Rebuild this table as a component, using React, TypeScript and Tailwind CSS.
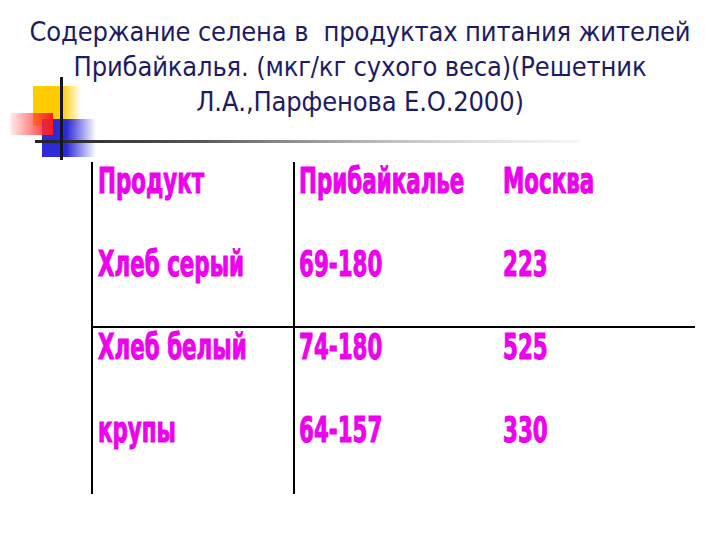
import React from "react";

const rows = [
  ["Продукт", "Прибайкалье", "Москва"],
  ["Хлеб серый", "69-180", "223"],
  ["Хлеб белый", "74-180", "525"],
  ["крупы", "64-157", "330"],
];

function Corner() {
  return (
    <svg className="absolute left-0 top-[70px]" width="600" height="100" viewBox="0 0 600 100">
      <defs>
        <linearGradient id="yel" x1="0" x2="1" y1="0" y2="0">
          <stop offset="0" stopColor="#ffcc00" />
          <stop offset="0.6" stopColor="#ffcc00" />
          <stop offset="1" stopColor="#ffcc00" stopOpacity="0" />
        </linearGradient>
        <linearGradient id="red" x1="0" x2="1" y1="0" y2="0">
          <stop offset="0" stopColor="#ff4444" stopOpacity="0.1" />
          <stop offset="0.7" stopColor="#ff3030" stopOpacity="0.8" />
          <stop offset="1" stopColor="#ff1a1a" />
        </linearGradient>
        <linearGradient id="blu" x1="0" x2="1" y1="0" y2="0">
          <stop offset="0" stopColor="#2b2bd8" />
          <stop offset="0.45" stopColor="#2b2bd8" />
          <stop offset="1" stopColor="#2b2bd8" stopOpacity="0" />
        </linearGradient>
        <linearGradient id="hl" x1="0" x2="1" y1="0" y2="0">
          <stop offset="0" stopColor="#222222" />
          <stop offset="0.3" stopColor="#555555" />
          <stop offset="1" stopColor="#e0e0e0" stopOpacity="0.3" />
        </linearGradient>
      </defs>
      <rect x="33" y="16" width="48" height="40" fill="url(#yel)" />
      <rect x="42" y="49" width="54" height="38" fill="url(#blu)" />
      <rect x="10" y="43" width="43" height="22" fill="url(#red)" />
      <rect x="35" y="70" width="545" height="3" fill="url(#hl)" />
      <rect x="60" y="7" width="3" height="83" fill="#15152a" />
    </svg>
  );
}

function Cell({ text, className }: { text: string; className: string }) {
  return (
    <div className={className}>
      <span className="inline-block origin-left scale-x-[0.68] whitespace-nowrap [-webkit-text-stroke:1px_#e600e6]">
        {text}
      </span>
    </div>
  );
}

export default function App() {
  return (
    <div className="relative w-[720px] h-[540px] bg-white overflow-hidden">
      <Corner />
      <h1
        className="relative pt-[14px] text-center text-[27px] leading-[35px] tracking-[-0.15px] text-[#1e1b66] font-normal"
        style={{ fontFamily: "'DejaVu Sans Condensed', 'Noto Sans', sans-serif" }}
      >
        Содержание селена в&nbsp; продуктах питания жителей
        <br />
        Прибайкалья. (мкг/кг сухого веса)(Решетник
        <br />
        Л.А.,Парфенова Е.О.2000)
      </h1>

      <div
        className="relative mt-[43px] ml-[91px] w-[604px] text-[#f000f0] font-bold text-[35px] leading-[36px]"
        style={{ fontFamily: "'DejaVu Sans Condensed', sans-serif" }}
      >
        {rows.map((r, i) => (
          <div
            key={i}
            className={`grid grid-cols-[202px_204px_198px] h-[83px] ${i === 1 ? "border-b-2 border-black" : ""}`}
          >
            <Cell text={r[0]} className="border-l-2 border-black pl-[5px] pt-[1px]" />
            <Cell text={r[1]} className="border-l-2 border-black pl-[4px] pt-[1px]" />
            <Cell text={r[2]} className="pl-[6px] pt-[1px]" />
          </div>
        ))}
      </div>
    </div>
  );
}
